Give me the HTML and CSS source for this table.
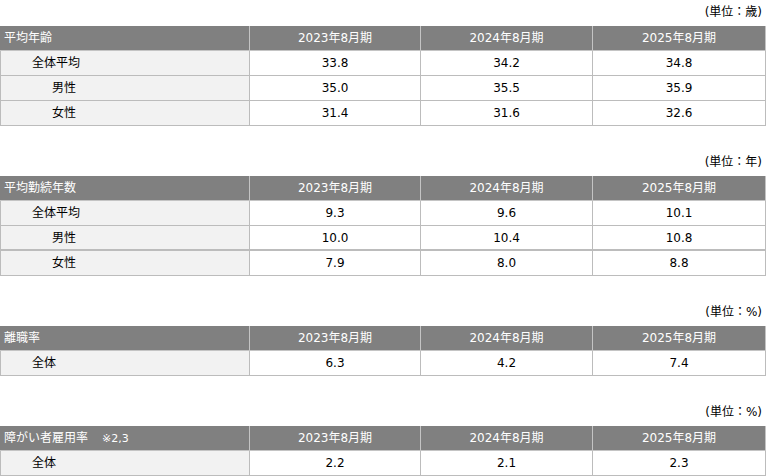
FILE: index.html
```html
<!DOCTYPE html>
<html lang="ja">
<head>
<meta charset="utf-8">
<link rel="stylesheet" href="styles.css">
</head>
<body>
<div class="page">
  <section class="block">
    <div class="unit">(単位：歳)</div>
    <table class="data">
      <colgroup><col class="c1"><col class="c2"><col class="c3"><col class="c4"></colgroup>
      <tr class="head"><th class="label">平均年齢</th><th>2023年8月期</th><th>2024年8月期</th><th>2025年8月期</th></tr>
      <tr><td class="label l4">全体平均</td><td>33.8</td><td>34.2</td><td>34.8</td></tr>
      <tr><td class="label l2">男性</td><td>35.0</td><td>35.5</td><td>35.9</td></tr>
      <tr><td class="label l2">女性</td><td>31.4</td><td>31.6</td><td>32.6</td></tr>
    </table>
  </section>
  <section class="block">
    <div class="unit">(単位：年)</div>
    <table class="data">
      <colgroup><col class="c1"><col class="c2"><col class="c3"><col class="c4"></colgroup>
      <tr class="head"><th class="label">平均勤続年数</th><th>2023年8月期</th><th>2024年8月期</th><th>2025年8月期</th></tr>
      <tr><td class="label l4">全体平均</td><td>9.3</td><td>9.6</td><td>10.1</td></tr>
      <tr class="thick"><td class="label l2">男性</td><td>10.0</td><td>10.4</td><td>10.8</td></tr>
      <tr><td class="label l2">女性</td><td>7.9</td><td>8.0</td><td>8.8</td></tr>
    </table>
  </section>
  <section class="block">
    <div class="unit">(単位：%)</div>
    <table class="data">
      <colgroup><col class="c1"><col class="c2"><col class="c3"><col class="c4"></colgroup>
      <tr class="head"><th class="label">離職率</th><th>2023年8月期</th><th>2024年8月期</th><th>2025年8月期</th></tr>
      <tr><td class="label l4">全体</td><td>6.3</td><td>4.2</td><td>7.4</td></tr>
    </table>
  </section>
  <section class="block">
    <div class="unit">(単位：%)</div>
    <table class="data">
      <colgroup><col class="c1"><col class="c2"><col class="c3"><col class="c4"></colgroup>
      <tr class="head"><th class="label">障がい者雇用率<span class="note">※2,3</span></th><th>2023年8月期</th><th>2024年8月期</th><th>2025年8月期</th></tr>
      <tr><td class="label l4">全体</td><td>2.2</td><td>2.1</td><td>2.3</td></tr>
    </table>
  </section>
</div>
</body>
</html>
```

FILE: styles.css
```css
html, body {
  margin: 0;
  padding: 0;
  background: #ffffff;
}
body {
  font-family: "DejaVu Sans", "Noto Sans CJK JP", sans-serif;
  font-size: 12px;
  color: #000000;
}
.page {
  width: 766px;
  display: flex;
  flex-direction: column;
}
.block + .block {
  margin-top: 24px;
}
.unit {
  height: 26px;
  line-height: 24px;
  text-align: right;
  padding-right: 3px;
  box-sizing: border-box;
  width: 765px;
}
.data {
  border-collapse: collapse;
  table-layout: fixed;
  width: 765px;
}
.c1 { width: 249px; }
.c2 { width: 171px; }
.c3 { width: 172px; }
.c4 { width: 173px; }
.data th, .data td {
  height: 24px;
  padding: 0;
  border: 1px solid #bcbcbc;
  text-align: center;
  vertical-align: middle;
  font-weight: normal;
  line-height: 16px;
  white-space: nowrap;
}
.data th {
  background: #808080;
  color: #ffffff;
  border-top: none;
  border-color: #c4c4c4;
  border-left-color: #808080;
}
.data th + th {
  border-left-color: #c4c4c4;
}
.data th.label {
  text-align: left;
  padding-left: 3px;
}
.data td.label {
  background: #f2f2f2;
  text-align: left;
}
.data td.l4 { padding-left: 31px; }
.data td.l2 { padding-left: 51px; }
.thick td {
  height: 23px;
  border-bottom-width: 2px;
}
.note {
  font-size: 11px;
  margin-left: 14px;
}
```
